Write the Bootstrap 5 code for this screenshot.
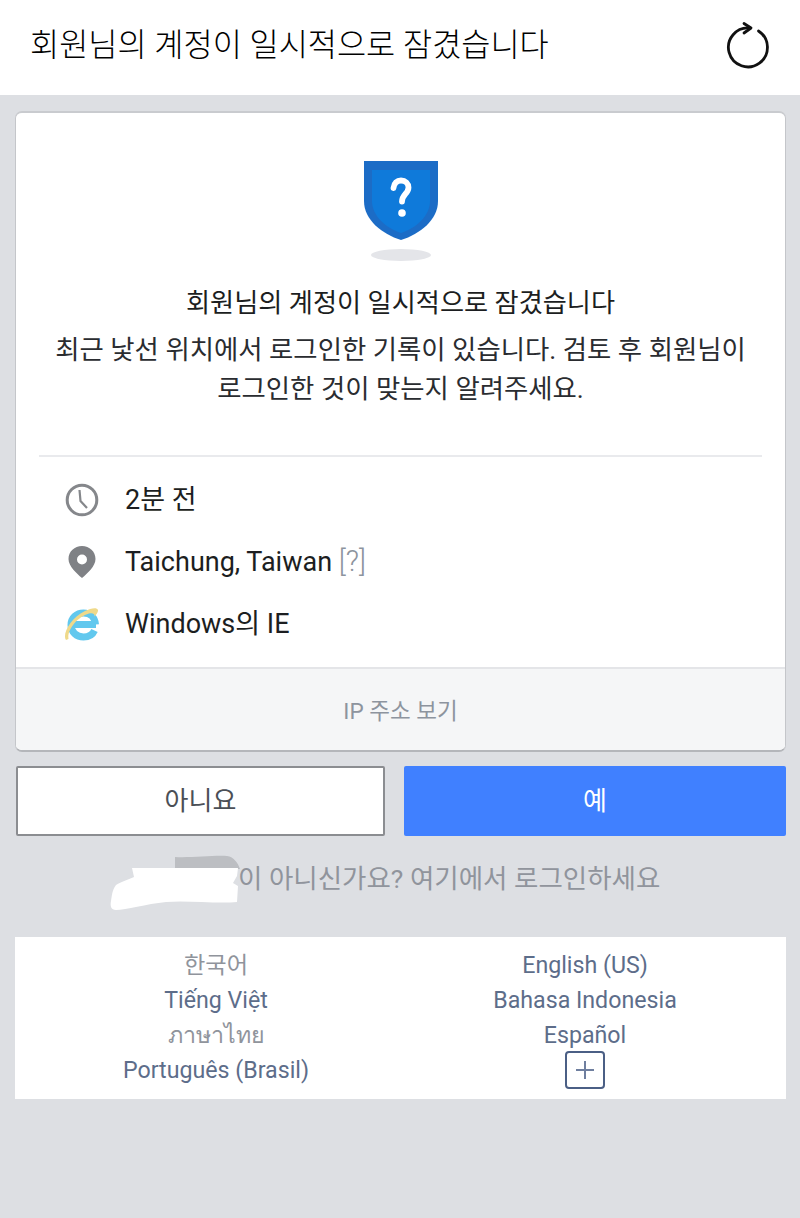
<!DOCTYPE html>
<html lang="ko">
<head>
  <meta charset="UTF-8" />
  <meta name="viewport" content="width=device-width, initial-scale=1.0" />
  <title>회원님의 계정이 일시적으로 잠겼습니다</title>
  <link href="https://cdn.jsdelivr.net/npm/bootstrap@5.3.3/dist/css/bootstrap.min.css" rel="stylesheet" />
  <style>
    body { background: #dddfe3; font-family: Roboto, "Noto Sans CJK KR", sans-serif; color: #1c1e21; height: 1218px; overflow: hidden; }
    .top-bar { height: 95px; background: #fff; padding: 0 31px 0 30px; }
    .top-title { font-size: 31.7px; font-weight: 300; color: #000; margin-top: -4px; }
    .reload-icon { margin-top: -5px; }
    .lock-panel { margin: 16px 14px 0 15px; background: #fff; border: 1px solid #c4c6ca; border-bottom: 2px solid #b4b6ba; border-top: 2px solid #c9cbcf; border-radius: 7px; height: 641px; overflow: hidden; }
    .panel-head { height: 344px; padding-top: 48px; border-bottom: 2px solid #e9eaed; margin: 0 23px; }
    .shield-shadow { width: 60px; height: 12px; border-radius: 50%; background: #e4e5e9; margin: 9px auto 0; }
    .panel-title { font-size: 26.2px; line-height: 39px; margin-top: 23px; color: #1c1e21; }
    .panel-text { font-size: 26.4px; line-height: 39px; color: #2a2c30; margin: 8px -4px 0; }
    .info-rows { height: 210px; padding: 12px 0 0 48px; }
    .info-row { height: 62px; font-size: 27px; color: #1c1e21; }
    .info-icon { width: 36px; margin-right: 25px; }
    .hint-mark { color: #8d949e; font-size: 29px; font-weight: 300; }
    .ip-bar { height: 84px; background: #f5f6f7; border-top: 2px solid #e4e5e8; color: #8d949e; font-size: 22.5px; padding-top: 3px; }
    .choice-row { margin: 14px 14px 0 16px; gap: 19px; }
    .choice-btn { height: 70px; font-size: 26px; border-radius: 2px; padding: 0; }
    .choice-no { width: 369px; background: #fff; border: 2px solid #8b8d91; color: #4b4f56; }
    .choice-yes { width: 382px; background: #4080ff; border: 0; color: #fff; }
    .other-login { position: relative; height: 101px; padding: 26px 0 0 238px; font-size: 26.5px; color: #90949c; line-height: 34px; }
    .mask-blob { position: absolute; left: 108px; top: 18px; }
    .lang-box { background: #fff; margin: 0 14px 0 15px; height: 162px; padding-top: 11px; font-size: 23.2px; line-height: 35px; color: #5d6d8a; }
    .lang-col-a { width: 402px; }
    .lang-col-b { width: 336px; }
    .lang-muted { color: #90949c; }
    .plus-box { width: 40px; height: 38px; border: 2px solid #4b5f85; border-radius: 4px; margin: -2px auto 0; }
  </style>
</head>
<body>
  <div class="top-bar d-flex align-items-center justify-content-between">
    <div class="top-title">회원님의 계정이 일시적으로 잠겼습니다</div>
    <svg class="reload-icon" width="44" height="50" viewBox="0 0 44 50" fill="none" stroke="#111" stroke-width="2.800" stroke-linecap="round" stroke-linejoin="round">
      <path d="M25 8A19.500 19.500 0 1 0 33.500 11"/>
      <path d="M19 3.500L26 8l-7 5"/>
    </svg>
  </div>

  <div class="lock-panel">
    <div class="panel-head text-center">
      <svg class="d-block mx-auto" width="74" height="79" viewBox="0 0 74 79">
        <path d="M0 0h74v40c0 19-18 33-37 39C18 73 0 59 0 40z" fill="#1c6cc6"/>
        <path d="M8 9h58v31c0 15-14 27-29 32C22 67 8 55 8 40z" fill="#0f7ada"/>
        <path d="M29.500 27c.5-5 3.500-7.500 7.500-7.500 4.500 0 7.500 3 7.500 7 0 6-6.500 7-6.500 14" fill="none" stroke="#fff" stroke-width="5.800" stroke-linecap="round"/>
        <circle cx="38" cy="52" r="3.800" fill="#fff"/>
      </svg>
      <div class="shield-shadow"></div>
      <div class="panel-title">회원님의 계정이 일시적으로 잠겼습니다</div>
      <div class="panel-text">최근 낯선 위치에서 로그인한 기록이 있습니다. 검토 후 회원님이<br>로그인한 것이 맞는지 알려주세요.</div>
    </div>

    <div class="info-rows">
      <div class="info-row d-flex align-items-center">
        <svg class="info-icon" height="34" viewBox="0 0 36 34" fill="none" stroke="#85878b">
          <circle cx="18" cy="17" r="14.800" stroke-width="3"/>
          <path d="M15.500 7l1 11 6.500 7" stroke-width="2.200"/>
        </svg>
        <span>2분 전</span>
      </div>
      <div class="info-row d-flex align-items-center">
        <svg class="info-icon" height="32" viewBox="0 0 36 32">
          <path fill="#7f8185" fill-rule="evenodd" d="M18 0C10.500 0 4.500 5.500 4.500 13c0 7 8 14.500 13.500 19 5.500-4.500 13.500-12 13.500-19C31.500 5.500 25.500 0 18 0zm0 8.500a5 5 0 1 1 0 10 5 5 0 0 1 0-10z"/>
        </svg>
        <span>Taichung, Taiwan <span class="hint-mark">[?]</span></span>
      </div>
      <div class="info-row d-flex align-items-center">
        <svg class="info-icon" height="36" viewBox="0 0 36 36" fill="none">
          <path d="M7 18.500h25M31.500 18.500C31 11.500 26 7 19.500 7 12.500 7 7 12 7 19c0 7 5.500 12 12.500 12 4.500 0 9-2 11-6.500" stroke="#62c8ee" stroke-width="7"/>
          <path d="M2 34C-2 29 6 12 21 5c6-3 12-4 13-1 .5 2-2 5-3.500 6.500C31 8 29 6.500 25 7.500 13 11 3 24 4.500 33z" fill="#efd98a"/>
        </svg>
        <span>Windows의 IE</span>
      </div>
    </div>

    <div class="ip-bar d-flex align-items-center justify-content-center">IP 주소 보기</div>
  </div>

  <div class="choice-row d-flex">
    <button type="button" class="btn choice-btn choice-no">아니요</button>
    <button type="button" class="btn choice-btn choice-yes">예</button>
  </div>

  <div class="other-login">
    <svg class="mask-blob" width="135" height="60" viewBox="0 0 135 60">
      <path d="M67 3c15 1 40-2 52-1 7 1 11 7 13 13H67z" fill="#bcbec2"/>
      <path d="M24 14h106l-1 8-4 7 5 3-1 16c-20 2-50-2-71 0-20 2-40 8-50 8-5 0-6-4-5-9 1-5 1-11 5-16 4-3 12-5 18-8z" fill="#fff"/>
    </svg>
    이 아니신가요? 여기에서 로그인하세요
  </div>

  <div class="lang-box d-flex text-center">
    <div class="lang-col-a">
      <div class="lang-muted">한국어</div>
      <div>Tiếng Việt</div>
      <div class="lang-muted">ภาษาไทย</div>
      <div>Português (Brasil)</div>
    </div>
    <div class="lang-col-b">
      <div>English (US)</div>
      <div>Bahasa Indonesia</div>
      <div>Español</div>
      <div class="plus-box d-flex align-items-center justify-content-center">
        <svg width="20" height="20" viewBox="0 0 20 20" stroke="#6f7f9f" stroke-width="2"><path d="M10 1v18M1 10h18"/></svg>
      </div>
    </div>
  </div>

  <script src="https://cdn.jsdelivr.net/npm/bootstrap@5.3.3/dist/js/bootstrap.bundle.min.js"></script>
</body>
</html>
